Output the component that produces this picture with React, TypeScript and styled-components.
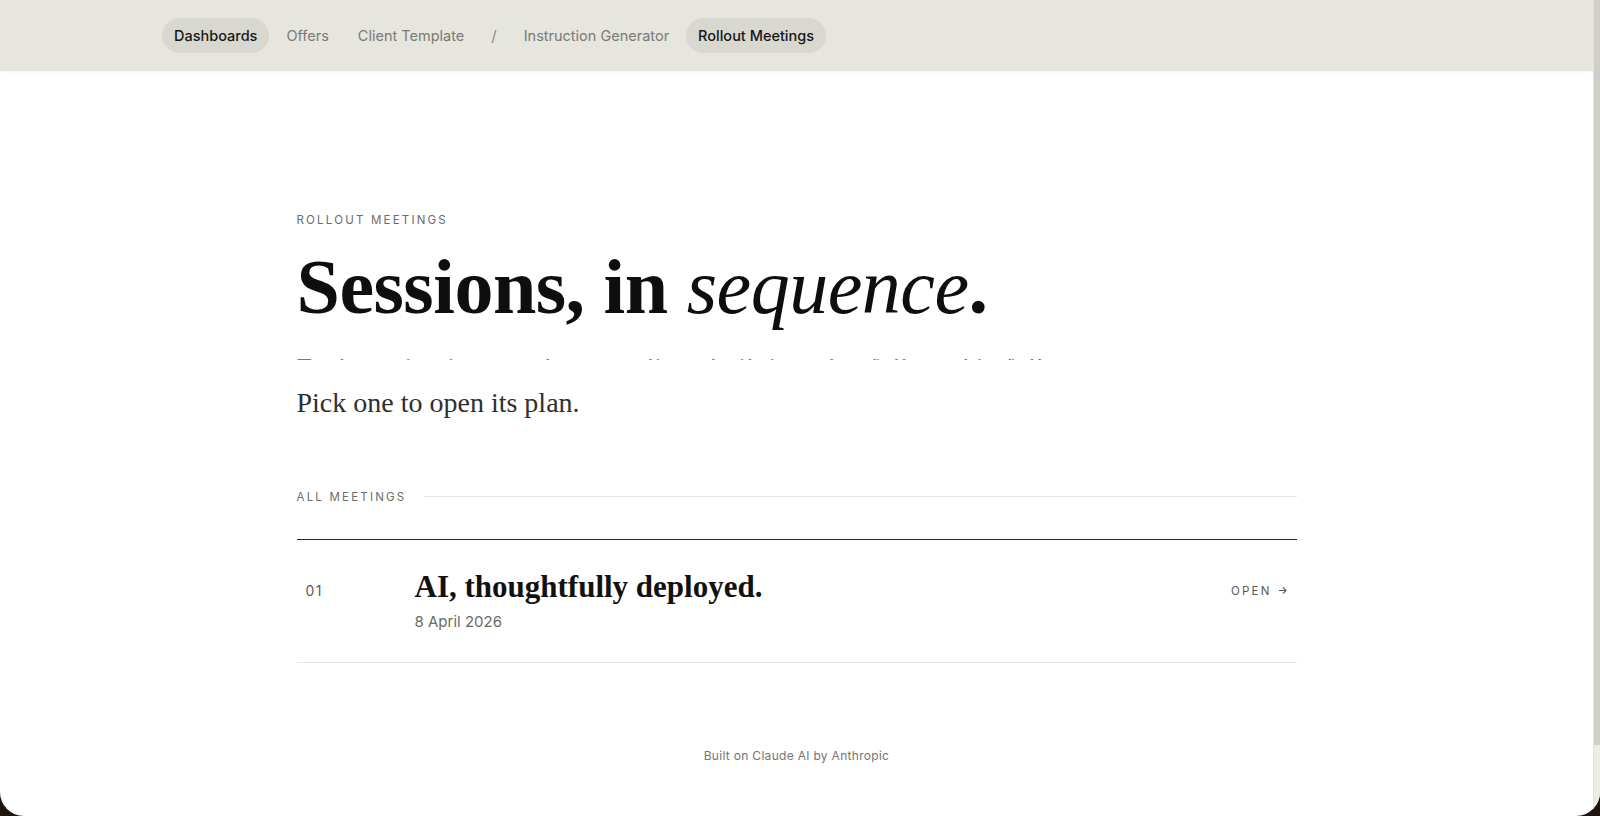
import React from 'react';
import styled, { createGlobalStyle } from 'styled-components';

const GlobalStyle = createGlobalStyle`
  html, body {
    margin: 0;
    padding: 0;
    background: #1d1510;
    overflow: hidden;
  }
  * {
    box-sizing: border-box;
  }
`;

const Frame = styled.div`
  width: 1600px;
  height: 816px;
  display: flex;
  background: #ffffff;
  border-radius: 0 0 24px 24px;
  overflow: hidden;
`;

const Viewport = styled.div`
  flex: 1;
  min-width: 0;
  overflow: hidden;
  font-family: 'Inter', 'Liberation Sans', sans-serif;
`;

const ScrollTrack = styled.div`
  width: 7px;
  display: flex;
  flex-direction: column;
  background: #edece6;
  border-left: 1px solid #e2e1da;
`;

const ScrollThumb = styled.div`
  height: 745px;
  background: #d0cfc7;
`;

const Nav = styled.nav`
  height: 71px;
  background: #e6e5de;
  display: flex;
  align-items: center;
  gap: 5px;
  padding-left: 162px;
  box-shadow: 0 1px 2px rgba(0, 0, 0, 0.05);
`;

const NavItem = styled.a<{ $active?: boolean }>`
  height: 35px;
  display: flex;
  align-items: center;
  padding: 0 12px;
  border-radius: 18px;
  font-size: 14.5px;
  color: ${(p) => (p.$active ? '#161616' : '#7b7a75')};
  background: ${(p) => (p.$active ? '#d9d8d0' : 'transparent')};
  font-weight: ${(p) => (p.$active ? 500 : 400)};
  text-decoration: none;
  cursor: pointer;
`;

const Slash = styled.span`
  font-size: 15px;
  color: #8c8b86;
  padding: 0 10px;
`;

const Main = styled.main`
  width: 1000px;
  margin: 0 auto;
  padding-top: 141px;
`;

const Eyebrow = styled.div`
  font-size: 11.5px;
  line-height: 16px;
  letter-spacing: 2.2px;
  text-transform: uppercase;
  color: #6c6c6a;
`;

const Title = styled.h1`
  margin: 16px 0 0;
  font-family: 'Liberation Serif', 'Times New Roman', serif;
  font-weight: 700;
  font-size: 78px;
  line-height: 1.1;
  letter-spacing: -0.5px;
  color: #0e0e0e;

  em {
    font-weight: 400;
    font-style: italic;
  }
`;

/* first line of the intro, caught mid-reveal: only the tips of the tall letters show */
const RevealLine = styled.div`
  margin-top: 29px;
  height: 1px;
  overflow: hidden;
  font-family: 'Liberation Serif', 'Times New Roman', serif;
  font-size: 28px;
  line-height: 28px;
  color: #777;
  white-space: nowrap;

  span {
    display: block;
    transform: translateY(-5px);
  }
`;

const Lede = styled.p`
  margin: 22px 0 0;
  font-family: 'Liberation Serif', 'Times New Roman', serif;
  font-size: 28px;
  line-height: 1.5;
  color: #2f2f2f;
`;

const SectionHead = styled.div`
  margin-top: 65px;
  display: flex;
  align-items: center;
  gap: 18px;

  &::after {
    content: '';
    flex: 1;
    height: 1px;
    background: #e4e4e2;
  }
`;

const List = styled.div`
  margin-top: 34px;
  border-top: 1.5px solid #2a2a2a;
`;

const Row = styled.div`
  display: grid;
  grid-template-columns: 118px 1fr auto;
  align-items: start;
  padding: 29px 0 30px;
  border-bottom: 1px solid #e6e6e4;
  cursor: pointer;
`;

const Num = styled.span`
  padding-left: 9px;
  margin-top: 12px;
  font-size: 14px;
  line-height: 20px;
  letter-spacing: 1.5px;
  color: #5c5c5a;
`;

const MeetingTitle = styled.h3`
  margin: 0;
  font-family: 'Liberation Serif', 'Times New Roman', serif;
  font-weight: 700;
  font-size: 31px;
  line-height: 36px;
  color: #111;
`;

const MeetingDate = styled.div`
  margin-top: 7px;
  font-size: 15px;
  line-height: 20px;
  color: #6a6a68;
`;

const OpenLink = styled.span`
  margin-top: 13px;
  padding-right: 10px;
  display: flex;
  align-items: center;
  gap: 6px;
  font-size: 11.5px;
  line-height: 18px;
  letter-spacing: 2.2px;
  color: #5a5a58;
`;

const Footer = styled.footer`
  margin-top: 85px;
  text-align: center;
  font-size: 12px;
  line-height: 16px;
  letter-spacing: 0.3px;
  color: #757573;
`;

const Arrow = () => (
  <svg width="9" height="9" viewBox="0 0 10 10" fill="none" stroke="currentColor" strokeWidth="1.2">
    <path d="M1 5h8M5.5 1.5L9 5l-3.5 3.5" />
  </svg>
);

const meetings = [{ n: '01', title: 'AI, thoughtfully deployed.', date: '8 April 2026' }];

const App: React.FC = () => {
  return (
    <Frame>
      <GlobalStyle />
      <Viewport>
        <Nav>
          <NavItem $active>Dashboards</NavItem>
          <NavItem>Offers</NavItem>
          <NavItem>Client Template</NavItem>
          <Slash>/</Slash>
          <NavItem>Instruction Generator</NavItem>
          <NavItem $active>Rollout Meetings</NavItem>
        </Nav>
        <Main>
          <Eyebrow>Rollout Meetings</Eyebrow>
          <Title>
            Sessions, in <em>sequence</em>.
          </Title>
          <RevealLine>
            <span>Each session is scoped to one client, built in order, followed in full.</span>
          </RevealLine>
          <Lede>Pick one to open its plan.</Lede>

          <SectionHead>
            <Eyebrow>All Meetings</Eyebrow>
          </SectionHead>
          <List>
            {meetings.map((m) => (
              <Row key={m.n}>
                <Num>{m.n}</Num>
                <div>
                  <MeetingTitle>{m.title}</MeetingTitle>
                  <MeetingDate>{m.date}</MeetingDate>
                </div>
                <OpenLink>
                  OPEN <Arrow />
                </OpenLink>
              </Row>
            ))}
          </List>
          <Footer>Built on Claude AI by Anthropic</Footer>
        </Main>
      </Viewport>
      <ScrollTrack>
        <ScrollThumb />
      </ScrollTrack>
    </Frame>
  );
};

export default App;
